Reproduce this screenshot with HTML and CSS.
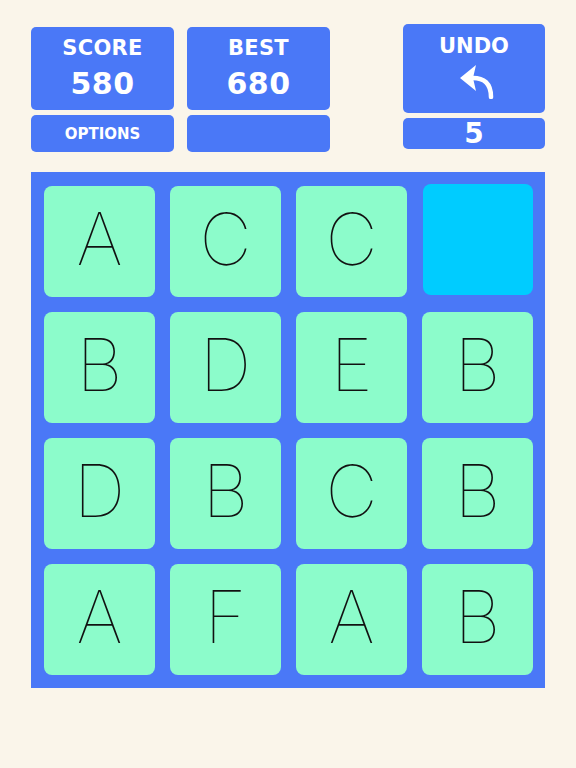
FILE: index.html
```html
<!DOCTYPE html>
<html lang="en">
<head>
    <meta charset="UTF-8">
    <meta name="viewport" content="width=device-width, initial-scale=1.0">
    <title>Letters</title>
    <link rel="stylesheet" href="styles.css">
</head>
<body>
    <div class="top-bar">
        <div class="stat-col">
            <div class="stat-box">
                <span class="stat-label">SCORE</span>
                <span class="stat-value">580</span>
            </div>
            <div class="small-btn">OPTIONS</div>
        </div>
        <div class="stat-col">
            <div class="stat-box">
                <span class="stat-label">BEST</span>
                <span class="stat-value">680</span>
            </div>
            <div class="small-btn"></div>
        </div>
        <div class="undo-col">
            <div class="undo-box">
                <span class="undo-label">UNDO</span>
                <svg class="undo-icon" width="40" height="40" viewBox="0 0 40 40">
                    <path d="M4 19 L20 6 L17 19 L20 32 Z" fill="#fff"/>
                    <path d="M15 19 Q35 18 35 38" fill="none" stroke="#fff" stroke-width="4.5" stroke-linecap="round"/>
                </svg>
            </div>
            <div class="undo-count">5</div>
        </div>
    </div>

    <div class="board">
        <div class="tile">A</div>
        <div class="tile">C</div>
        <div class="tile">C</div>
        <div class="tile tile-empty"></div>
        <div class="tile">B</div>
        <div class="tile">D</div>
        <div class="tile">E</div>
        <div class="tile">B</div>
        <div class="tile">D</div>
        <div class="tile">B</div>
        <div class="tile">C</div>
        <div class="tile">B</div>
        <div class="tile">A</div>
        <div class="tile">F</div>
        <div class="tile">A</div>
        <div class="tile">B</div>
    </div>
</body>
</html>
```

FILE: styles.css
```css
body {
    margin: 0;
    background: #faf5ea;
    font-family: "DejaVu Sans", Verdana, sans-serif;
    color: #fff;
}

.top-bar {
    display: flex;
    gap: 13px;
    padding: 24px 31px 0 31px;
    width: 514px;
}

.stat-col {
    display: flex;
    flex-direction: column;
    gap: 5px;
    width: 143px;
    margin-top: 3px;
}

.stat-box {
    height: 83px;
    background: #4a78f7;
    border-radius: 5px;
    display: flex;
    flex-direction: column;
    align-items: center;
    padding-top: 8px;
    box-sizing: border-box;
}

.stat-label {
    font-weight: bold;
    font-size: 21px;
    line-height: 26px;
    letter-spacing: 0.3px;
}

.stat-value {
    font-weight: bold;
    font-size: 30px;
    line-height: 36px;
    margin-top: 5px;
    letter-spacing: 0.5px;
}

.small-btn {
    height: 37px;
    background: #4a78f7;
    border-radius: 5px;
    display: flex;
    align-items: center;
    justify-content: center;
    font-weight: bold;
    font-size: 15px;
}

.undo-col {
    display: flex;
    flex-direction: column;
    gap: 5px;
    width: 142px;
    margin-left: auto;
}

.undo-box {
    height: 89px;
    background: #4a78f7;
    border-radius: 5px;
    display: flex;
    flex-direction: column;
    align-items: center;
    padding-top: 10px;
    box-sizing: border-box;
}

.undo-label {
    font-weight: bold;
    font-size: 21px;
    line-height: 24px;
}

.undo-icon {
    margin-top: 1px;
    margin-left: 4px;
}

.undo-count {
    height: 31px;
    background: #4a78f7;
    border-radius: 5px;
    display: flex;
    align-items: center;
    justify-content: center;
    font-weight: bold;
    font-size: 28px;
}

.board {
    margin: 20px 0 0 31px;
    width: 514px;
    box-sizing: border-box;
    padding: 14px 12px 13px 13px;
    background: #4a78f7;
    display: grid;
    grid-template-columns: repeat(4, 111px);
    grid-auto-rows: 111px;
    column-gap: 15px;
    row-gap: 15px;
}

.tile {
    background: #8cfccb;
    border-radius: 8px;
    display: flex;
    align-items: center;
    justify-content: center;
    font-family: Inter, "Open Sans", sans-serif;
    font-weight: 100;
    font-size: 72px;
    color: #111;
    padding-bottom: 7px;
    box-sizing: border-box;
}

.tile-empty {
    background: #00ccff;
    margin: -2px 0 2px 1px;
}
```
